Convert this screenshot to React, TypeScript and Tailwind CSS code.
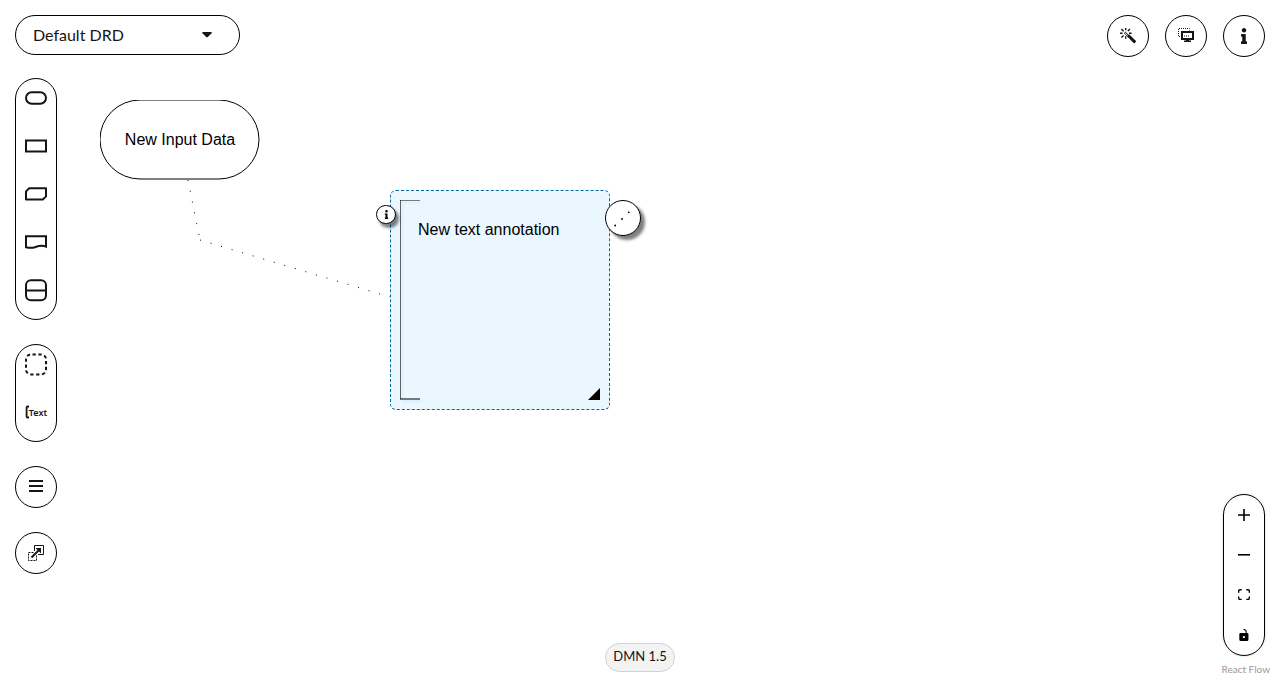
import type { ReactNode } from "react";
import { FaInfo } from "react-icons/fa";

const line = { fill: "none", stroke: "#151515", strokeWidth: 2 } as const;

function Icon({ children }: { children: ReactNode }) {
  return (
    <svg viewBox="0 0 24 24" className="size-6" aria-hidden="true">
      {children}
    </svg>
  );
}

function PaletteButton({ label, children }: { label: string; children: ReactNode }) {
  return (
    <button type="button" aria-label={label} className="mb-2.5 flex h-[38px] w-10 items-center justify-center">
      {children}
    </button>
  );
}

function Palette({ children }: { children: ReactNode }) {
  return <div className="flex w-[42px] flex-col rounded-full border border-black bg-white">{children}</div>;
}

function RoundButton({ label, children }: { label: string; children: ReactNode }) {
  return (
    <button
      type="button"
      aria-label={label}
      className="flex size-[42px] items-center justify-center rounded-full border border-black bg-white text-[#151515]"
    >
      {children}
    </button>
  );
}

function ControlButton({ label, viewBox, d }: { label: string; viewBox: string; d: string }) {
  return (
    <button type="button" aria-label={label} className="flex size-10 items-center justify-center">
      <svg viewBox={viewBox} className="w-3 max-h-3" aria-hidden="true">
        <path d={d} />
      </svg>
    </button>
  );
}

function Diagram() {
  return (
    <main className="absolute inset-0 overflow-hidden font-['Liberation_Sans',sans-serif] text-base text-black">
      <svg className="absolute inset-0 size-full" fill="none" stroke="black" strokeDasharray="1 10" aria-hidden="true">
        <path d="M188 180L200 240" />
        <path d="M200 240L400 300" />
      </svg>

      <div className="absolute top-[100px] left-[100px] flex h-20 w-40 items-center justify-center">
        <svg className="absolute inset-0 size-full overflow-hidden" aria-hidden="true">
          <rect width="159" height="79" rx="40" fill="white" stroke="black" />
        </svg>
        <span className="relative">New Input Data</span>
      </div>

      <div className="absolute top-[190px] left-[390px] size-[220px] rounded-md border border-dashed border-[#006ba4] bg-[#eaf7ff] pt-[27px] pl-[27px]">
        <svg
          viewBox="0 0 24 200"
          className="absolute top-[9px] left-[9px] h-[200px] w-6 overflow-hidden drop-shadow-[2px_2px_1px_rgba(0,80,130,0.15)]"
          fill="none"
          stroke="black"
          aria-hidden="true"
        >
          <path d="M20 0H0V199H20" strokeWidth="1.2" />
        </svg>
        <span>New text annotation</span>
        <svg viewBox="0 0 12 12" className="absolute right-[9px] bottom-[9px] size-3" aria-hidden="true">
          <path d="M12 0V12H0Z" />
        </svg>
        <button
          type="button"
          aria-label="Open properties"
          className="absolute top-[14px] -left-[15px] flex h-[19px] w-5 items-center justify-center rounded-full border border-black bg-white shadow-[3px_4px_3px_rgba(0,0,0,0.5)]"
        >
          <FaInfo size={9} />
        </button>
        <button
          type="button"
          aria-label="Add association"
          className="absolute top-[9px] -right-8 flex size-9 items-center justify-center rounded-full border border-black bg-white shadow-[4px_4px_3px_rgba(0,0,0,0.5)]"
        >
          <svg viewBox="0 0 34 34" className="size-[34px]" aria-hidden="true">
            <circle cx="9.2" cy="24.5" r="0.9" />
            <circle cx="16" cy="18" r="0.9" />
            <circle cx="22.8" cy="11.3" r="0.9" />
          </svg>
        </button>
      </div>
    </main>
  );
}

export default function App() {
  return (
    <div className="relative min-h-screen bg-white font-[Lato,sans-serif] text-[#151515]">
      <Diagram />

      <div className="relative grid min-h-screen grid-cols-[1fr_auto_1fr]">
        <div className="flex flex-col items-start gap-6 pt-[15px] pl-[15px]">
          <div className="relative -mb-px w-[225px]">
            <select
              aria-label="DRD"
              className="block h-10 w-full appearance-none rounded-full border border-black bg-white pr-10 pl-[17px] text-base"
            >
              <option>Default DRD</option>
            </select>
            <svg viewBox="0 0 10 6" className="pointer-events-none absolute top-[17px] right-7 h-1.5 w-2.5" aria-hidden="true">
              <path d="M0.8 0H9.2Q10.2 0.3 9.5 1.2L5.8 5Q5 5.7 4.2 5L0.5 1.2Q-0.2 0.3 0.8 0Z" fill="#151515" />
            </svg>
          </div>

          <Palette>
            <PaletteButton label="Input Data">
              <Icon>
                <rect x="2" y="6.3" width="20" height="11.4" rx="5.7" {...line} />
              </Icon>
            </PaletteButton>
            <PaletteButton label="Decision">
              <Icon>
                <rect x="2" y="6.5" width="20" height="11" {...line} />
              </Icon>
            </PaletteButton>
            <PaletteButton label="Business Knowledge Model">
              <Icon>
                <path d="M5.2 6.3H22V14.4L18.8 17.5H2V9.4Z" {...line} strokeLinejoin="round" />
              </Icon>
            </PaletteButton>
            <PaletteButton label="Knowledge Source">
              <Icon>
                <path d="M2 6.3H22V16.6C17.5 14.4 14 16 11 17.2C8 18.2 5 18 2 17.2Z" {...line} />
              </Icon>
            </PaletteButton>
            <PaletteButton label="Decision Service">
              <Icon>
                <rect x="2" y="2.3" width="20" height="20" rx="5" {...line} />
                <path d="M2 12.5H22" {...line} />
              </Icon>
            </PaletteButton>
          </Palette>

          <Palette>
            <PaletteButton label="Group">
              <Icon>
                <rect x="2" y="2.4" width="20" height="20" rx="5" {...line} strokeDasharray="3.3 2.6" strokeDashoffset="-1.5" />
              </Icon>
            </PaletteButton>
            <PaletteButton label="Text Annotation">
              <span className="flex items-center">
                <svg viewBox="0 0 4 14" className="h-3.5 w-1" aria-hidden="true">
                  <path d="M4 1.5H2.6Q1.6 1.5 1.6 2.8V11.2Q1.6 12.5 2.6 12.5H4" {...line} strokeWidth="1.8" />
                </svg>
                <span className="font-['Noto_Sans',sans-serif] text-[9px] leading-none font-semibold">Text</span>
              </span>
            </PaletteButton>
          </Palette>

          <RoundButton label="DRG Nodes">
            <svg viewBox="0 0 16 16" className="size-4" aria-hidden="true">
              <path d="M1 2H15M1 7H15M1 12H15" {...line} />
            </svg>
          </RoundButton>

          <RoundButton label="External Nodes">
            <svg viewBox="0 0 16 16" className="size-4" aria-hidden="true">
              <path d="M6.5 6V0.5H15.5V9.5H10" {...line} strokeWidth="1" />
              <path d="M5.5 7.5H0.5V15.5H8.5V10" {...line} strokeWidth="1" strokeDasharray="2 1" />
              <path d="M3.5 12.5L11.5 4.5" {...line} />
              <path d="M7.5 3H13V8.5Z" fill="#151515" />
            </svg>
          </RoundButton>
        </div>

        <div className="flex items-end pb-2">
          <span className="flex h-[29px] items-center rounded-full border border-[#d2d2d2] bg-[#f3f3f3] px-[7px] pb-px text-[13px]">
            DMN 1.5
          </span>
        </div>

        <div className="flex flex-col items-end justify-between pt-[15px] pr-[15px]">
          <div className="flex gap-4">
            <RoundButton label="Autolayout">
              <svg viewBox="0 0 16 16" className="size-4" aria-hidden="true">
                <path
                  d="M5.7 0V2.3M5.7 8.3V10.8M0 5.3H2.6M9 5.3H11.6M1.4 1L3.6 3.2M10 1L7.9 3.1M1.4 9.6L3.6 7.4"
                  {...line}
                  strokeWidth="1.4"
                />
                <path d="M4.8 4.4L8.4 8" fill="none" stroke="#151515" strokeWidth="2.6" strokeDasharray="0.8 0.7" />
                <path d="M8 7.2L15.2 14.4" {...line} strokeWidth="3" />
              </svg>
            </RoundButton>
            <RoundButton label="Toggle overlays">
              <svg viewBox="0 0 16 16" className="size-4" aria-hidden="true">
                <path d="M2 8.5H0.5V0.5H11.5V2.5" {...line} strokeWidth="1" strokeDasharray="1 1" />
                <rect x="4" y="4" width="11" height="7" fill="none" stroke="#151515" strokeWidth="2" />
                <path d="M6 8H12" {...line} strokeWidth="1" strokeDasharray="1 1" />
                <path d="M8 11.5H11V12.5H13V14H6V12.5H8Z" fill="#151515" />
              </svg>
            </RoundButton>
            <RoundButton label="Properties panel">
              <FaInfo size={16} />
            </RoundButton>
          </div>

          <div className="flex flex-col items-end">
            <div className="flex w-[42px] flex-col rounded-full border border-black bg-white shadow-[0_0_2px_1px_rgba(0,0,0,0.08)]">
              <ControlButton
                label="Zoom in"
                viewBox="0 0 32 32"
                d="M32 18.133H18.133V32h-4.266V18.133H0v-4.266h13.867V0h4.266v13.867H32z"
              />
              <ControlButton label="Zoom out" viewBox="0 0 32 5" d="M0 0h32v4.2H0z" />
              <ControlButton
                label="Fit view"
                viewBox="0 0 32 30"
                d="M3.692 4.63c0-.53.4-.938.939-.938h5.215V0H4.708C2.13 0 0 2.054 0 4.63v5.216h3.692V4.631zM27.354 0h-5.2v3.692h5.17c.53 0 .984.4.984.939v5.215H32V4.631A4.624 4.624 0 0027.354 0zm.954 24.83c0 .532-.4.94-.939.94h-5.215v3.768h5.215c2.577 0 4.631-2.13 4.631-4.707v-5.139h-3.692v5.139zm-23.677.94c-.531 0-.939-.4-.939-.94v-5.138H0v5.139c0 2.577 2.13 4.707 4.708 4.707h5.138V25.77H4.631z"
              />
              <ControlButton
                label="Toggle interactivity"
                viewBox="0 0 25 32"
                d="M21.333 10.667H19.81V7.619C19.81 3.429 16.38 0 12.19 0c-4.114 1.828-1.37 2.133.305 2.438 1.676.305 4.42 2.59 4.42 5.181v3.048H3.047A3.056 3.056 0 000 13.714v15.238A3.056 3.056 0 003.048 32h18.285a3.056 3.056 0 003.048-3.048V13.714a3.056 3.056 0 00-3.048-3.047zM12.19 24.533a3.056 3.056 0 01-3.047-3.047 3.056 3.056 0 013.047-3.048 3.056 3.056 0 013.048 3.048 3.056 3.056 0 01-3.048 3.047z"
              />
            </div>
            <a href="#react-flow" className="-mr-[5px] py-1 pt-1.5 text-[10px] leading-[14px] text-[#999]">
              React Flow
            </a>
          </div>
        </div>
      </div>
    </div>
  );
}
